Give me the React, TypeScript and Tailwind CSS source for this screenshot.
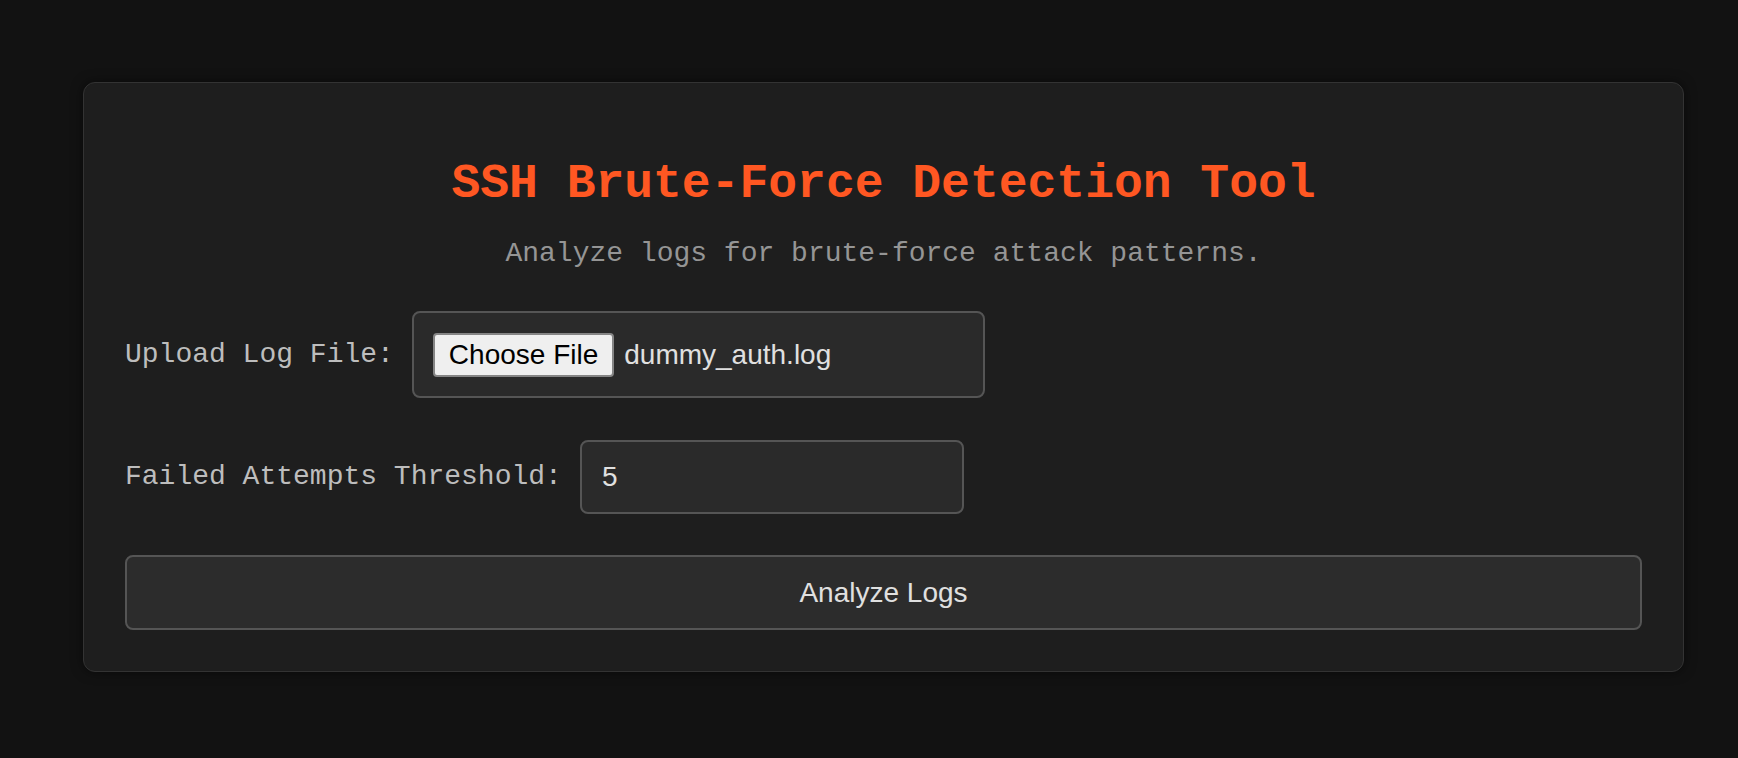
import React from 'react';

const mono = { fontFamily: '"Liberation Mono", "Courier New", monospace' };

export default function App() {
  const [threshold, setThreshold] = React.useState('5');

  return (
    <div className="min-h-screen w-full bg-[#121212] pt-[82px] pl-[83px]">
      <div className="w-[1601px] rounded-[12px] border border-[#333] bg-[#1e1e1e] px-[41px] pt-[74px] pb-[41px] shadow-[0_0_12px_rgba(0,0,0,0.5)]">
        <h1
          className="text-center text-[48px] leading-[54px] font-bold text-[#ff5722]"
          style={mono}
        >
          SSH Brute-Force Detection Tool
        </h1>
        <p className="mt-[27px] text-center text-[28px] leading-[32px] text-[#959595]" style={mono}>
          Analyze logs for brute-force attack patterns.
        </p>

        <div className="mt-[41px] flex items-center gap-[18px]">
          <label className="text-[28px] leading-[32px] text-[#bdbdbd]" style={mono}>
            Upload Log File:
          </label>
          <div className="flex h-[87px] w-[573px] items-center gap-[10px] rounded-[8px] border-2 border-[#555] bg-[#2a2a2a] px-[19px] font-['Liberation_Sans',Arial,sans-serif] text-[28px]">
            <span className="flex h-[44px] items-center rounded-[4px] border-2 border-[#858585] bg-[#efefef] px-[14px] text-black">
              Choose File
            </span>
            <span className="text-[#e0e0e0]">dummy_auth.log</span>
          </div>
        </div>

        <div className="mt-[42px] flex items-center gap-[18px]">
          <label className="text-[28px] leading-[32px] text-[#bdbdbd]" style={mono}>
            Failed Attempts Threshold:
          </label>
          <input
            type="number"
            value={threshold}
            onChange={(e) => setThreshold(e.target.value)}
            className="h-[74px] w-[384px] rounded-[8px] border-2 border-[#555] bg-[#2a2a2a] px-[20px] font-['Liberation_Sans',Arial,sans-serif] text-[28px] text-[#e0e0e0] outline-none [appearance:textfield] [&::-webkit-inner-spin-button]:appearance-none"
          />
        </div>

        <button className="mt-[41px] flex h-[75px] w-full items-center justify-center rounded-[8px] border-2 border-[#555] bg-[#2c2c2c] font-['Liberation_Sans',Arial,sans-serif] text-[28px] text-[#e0e0e0]">
          Analyze Logs
        </button>
      </div>
    </div>
  );
}
